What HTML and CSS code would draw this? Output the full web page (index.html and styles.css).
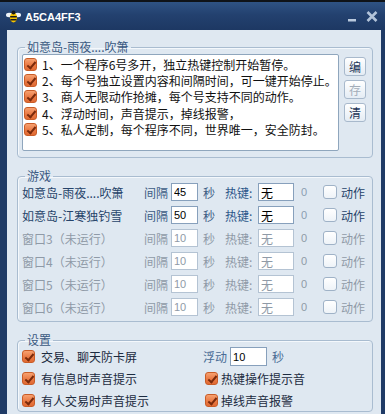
FILE: index.html
```html
<!DOCTYPE html>
<html lang="zh-CN">
<head>
    <meta charset="UTF-8">
    <title>A5CA4FF3</title>
    <link rel="stylesheet" href="styles.css">
</head>
<body>
    <div class="window">
        <div class="titlebar">
            <svg class="app-icon" width="15" height="13" viewBox="0 0 15 13">
                <ellipse cx="3.2" cy="5" rx="3.2" ry="2.2" fill="#eef3f9"/>
                <ellipse cx="11.8" cy="5" rx="3.2" ry="2.2" fill="#eef3f9"/>
                <ellipse cx="7.5" cy="7.5" rx="3.6" ry="5" fill="#f4c300"/>
                <rect x="4.2" y="6" width="6.6" height="1.5" fill="#1b1b1b"/>
                <rect x="4.4" y="9" width="6.2" height="1.5" fill="#1b1b1b"/>
                <circle cx="7.5" cy="2.4" r="2" fill="#1b1b1b"/>
            </svg>
            <span class="title">A5CA4FF3</span>
            <span class="spacer"></span>
            <svg class="tb-min" width="9" height="12" viewBox="0 0 9 12">
                <rect x="0" y="8" width="8" height="2.5" fill="#b9c9dd"/>
            </svg>
            <svg class="tb-close" width="12" height="11" viewBox="0 0 12 11">
                <path d="M1.5 1 L10.5 10 M10.5 1 L1.5 10" stroke="#b3c4da" stroke-width="2.6"/>
            </svg>
        </div>

        <div class="client">
            <!-- notes -->
            <fieldset class="group notes">
                <legend>如意岛-雨夜....吹箫</legend>
                <div class="notes-body">
                    <ul class="notes-list">
                        <li><span class="check on"></span>1、一个程序6号多开，独立热键控制开始暂停。</li>
                        <li><span class="check on"></span>2、每个号独立设置内容和间隔时间，可一键开始停止。</li>
                        <li><span class="check on"></span>3、商人无限动作抢摊，每个号支持不同的动作。</li>
                        <li><span class="check on"></span>4、浮动时间，声音提示，掉线报警，</li>
                        <li><span class="check on"></span>5、私人定制，每个程序不同，世界唯一，安全防封。</li>
                    </ul>
                    <div class="side-btns">
                        <button class="small-btn">编</button>
                        <button class="small-btn" disabled>存</button>
                        <button class="small-btn">清</button>
                    </div>
                </div>
            </fieldset>

            <!-- games -->
            <fieldset class="group games">
                <legend>游戏</legend>
                <div class="game-row">
                    <span class="g-name">如意岛-雨夜....吹箫</span>
                    <span class="g-lbl">间隔</span>
                    <input class="num" value="45">
                    <span class="g-sec">秒</span>
                    <span class="g-key">热键:</span>
                    <input class="key" value="无">
                    <span class="g-zero">0</span>
                    <span class="check"></span>
                    <span class="g-act">动作</span>
                </div>
                <div class="game-row">
                    <span class="g-name">如意岛-江寒独钓雪</span>
                    <span class="g-lbl">间隔</span>
                    <input class="num" value="50">
                    <span class="g-sec">秒</span>
                    <span class="g-key">热键:</span>
                    <input class="key" value="无">
                    <span class="g-zero">0</span>
                    <span class="check"></span>
                    <span class="g-act">动作</span>
                </div>
                <div class="game-row off">
                    <span class="g-name">窗口3（未运行）</span>
                    <span class="g-lbl">间隔</span>
                    <input class="num" value="10" disabled>
                    <span class="g-sec">秒</span>
                    <span class="g-key">热键:</span>
                    <input class="key" value="无" disabled>
                    <span class="g-zero">0</span>
                    <span class="check"></span>
                    <span class="g-act">动作</span>
                </div>
                <div class="game-row off">
                    <span class="g-name">窗口4（未运行）</span>
                    <span class="g-lbl">间隔</span>
                    <input class="num" value="10" disabled>
                    <span class="g-sec">秒</span>
                    <span class="g-key">热键:</span>
                    <input class="key" value="无" disabled>
                    <span class="g-zero">0</span>
                    <span class="check"></span>
                    <span class="g-act">动作</span>
                </div>
                <div class="game-row off">
                    <span class="g-name">窗口5（未运行）</span>
                    <span class="g-lbl">间隔</span>
                    <input class="num" value="10" disabled>
                    <span class="g-sec">秒</span>
                    <span class="g-key">热键:</span>
                    <input class="key" value="无" disabled>
                    <span class="g-zero">0</span>
                    <span class="check"></span>
                    <span class="g-act">动作</span>
                </div>
                <div class="game-row off">
                    <span class="g-name">窗口6（未运行）</span>
                    <span class="g-lbl">间隔</span>
                    <input class="num" value="10" disabled>
                    <span class="g-sec">秒</span>
                    <span class="g-key">热键:</span>
                    <input class="key" value="无" disabled>
                    <span class="g-zero">0</span>
                    <span class="check"></span>
                    <span class="g-act">动作</span>
                </div>
            </fieldset>

            <!-- settings -->
            <fieldset class="group settings">
                <legend>设置</legend>
                <div class="set-grid">
                    <label class="opt"><span class="check on"></span>交易、聊天防卡屏</label>
                    <div class="float-row">
                        <span class="f-lbl">浮动</span>
                        <input class="float" value="10">
                        <span class="f-lbl sec">秒</span>
                    </div>
                    <label class="opt"><span class="check on"></span>有信息时声音提示</label>
                    <label class="opt right"><span class="check on"></span>热键操作提示音</label>
                    <label class="opt"><span class="check on"></span>有人交易时声音提示</label>
                    <label class="opt right"><span class="check on"></span>掉线声音报警</label>
                </div>
            </fieldset>
        </div>
    </div>
</body>
</html>
```

FILE: styles.css
```css
* {
    box-sizing: border-box;
}
body {
    margin: 0;
    background: #1d3862;
    font-family: "Noto Sans CJK SC", sans-serif;
    font-size: 12px;
    color: #1c2b40;
}
.window {
    width: 385px;
    height: 414px;
    overflow: hidden;
    border-top: 2px solid #0f1318;
    background: #1f3b66;
}
/* title bar */
.titlebar {
    height: 28px;
    display: flex;
    align-items: center;
    padding: 1px 7px 0 6px;
    background: linear-gradient(#2f5384, #23416f 45%, #1d3863);
}
.title {
    margin-left: 4px;
    font: bold 11px "Liberation Sans", sans-serif;
    color: #fff;
}
.spacer {
    flex: 1;
}
.tb-close {
    margin-left: 9px;
}
/* client area */
.client {
    height: 384px;
    margin: 0 4px 0 7px;
    padding: 10px 8px 0 10px;
    background: #dfe8f1;
    display: flex;
    flex-direction: column;
    gap: 11px;
}
.group {
    margin: 0;
    min-width: 0;
    padding: 0 6px 6px 4px;
    border: 1px solid #a9bcd0;
    border-radius: 4px;
    box-shadow: inset 1px 1px 0 #f4f8fc;
}
.group legend {
    margin-left: 3px;
    padding: 0 2px;
    line-height: 14px;
    color: #3b5a82;
}
/* checkboxes */
.check {
    position: relative;
    flex: none;
    width: 13px;
    height: 13px;
    border: 1px solid #9fb2c7;
    border-radius: 3px;
    background: linear-gradient(#ffffff, #eef3f8);
}
.check.on {
    border-color: #c95c27;
    background: linear-gradient(#f7a170, #ea7a45 55%, #e06a33);
}
.check.on::after {
    content: "";
    position: absolute;
    left: 4px;
    top: 1px;
    width: 3px;
    height: 7px;
    border-right: 2px solid #7a2a0b;
    border-bottom: 2px solid #7a2a0b;
    transform: rotate(40deg);
}
/* notes */
.notes-body {
    display: flex;
    gap: 5px;
}
.notes-list {
    width: 317px;
    height: 97px;
    margin: 0;
    padding: 1px 0 0 1px;
    list-style: none;
    background: #fff;
    border: 1px solid #8fa6bd;
    border-radius: 2px;
    color: #111;
}
.notes-list li {
    display: flex;
    align-items: center;
    gap: 5px;
    height: 16.3px;
    white-space: nowrap;
}
.side-btns {
    display: flex;
    flex-direction: column;
    gap: 4px;
    padding-top: 3px;
}
.small-btn {
    width: 22px;
    height: 19px;
    padding: 0;
    font: 12px "Noto Sans CJK SC", sans-serif;
    line-height: 17px;
    color: #1d3557;
    background: linear-gradient(#ffffff, #e4ecf4);
    border: 1px solid #a8b9cc;
    border-radius: 3px;
}
.small-btn:disabled {
    color: #a3adb9;
}
/* games */
.games {
    display: flex;
    flex-direction: column;
    gap: 5px;
    padding-bottom: 5px;
}
.game-row {
    display: grid;
    grid-template-columns: 122px 27px 27px 27px 33px 36px 29px 18px auto;
    align-items: center;
    height: 18px;
    white-space: nowrap;
}
.g-name {
    color: #27446a;
}
.g-lbl, .g-sec {
    color: #3d5c85;
}
.g-sec {
    padding-left: 5px;
}
.g-key {
    color: #2c5789;
}
.g-zero {
    padding-left: 7px;
    font: 11px "Liberation Sans", sans-serif;
    color: #8b9db2;
}
.game-row .check {
    width: 14px;
    height: 14px;
}
.g-act {
    color: #27446a;
}
.game-row.off span {
    color: #8f9aa7;
}
input {
    height: 18px;
    margin: 0;
    padding: 0 0 0 2px;
    border: 1px solid #87a0bc;
    background: #fff;
    color: #000;
    outline: none;
}
.num {
    width: 27px;
    font: 11px "Liberation Sans", sans-serif;
}
.key {
    width: 36px;
    font: 12px "Noto Sans CJK SC", sans-serif;
}
input:disabled {
    color: #8f9aa7;
    border-color: #b4c3d3;
    background: #fff;
}
/* settings */
.settings {
    padding-bottom: 1px;
}
.set-grid {
    display: grid;
    grid-template-columns: 181px auto;
    grid-auto-rows: 19px;
    row-gap: 3px;
}
.opt {
    display: flex;
    align-items: center;
    gap: 6px;
    white-space: nowrap;
    color: #1c2b40;
}
.opt.right {
    padding-left: 2px;
    gap: 3px;
}
.float-row {
    display: flex;
    align-items: center;
}
.f-lbl {
    color: #4a6b95;
}
.float {
    width: 37px;
    height: 19px;
    margin-left: 3px;
    font: 11px "Liberation Sans", sans-serif;
}
.f-lbl.sec {
    margin-left: 5px;
}
```
